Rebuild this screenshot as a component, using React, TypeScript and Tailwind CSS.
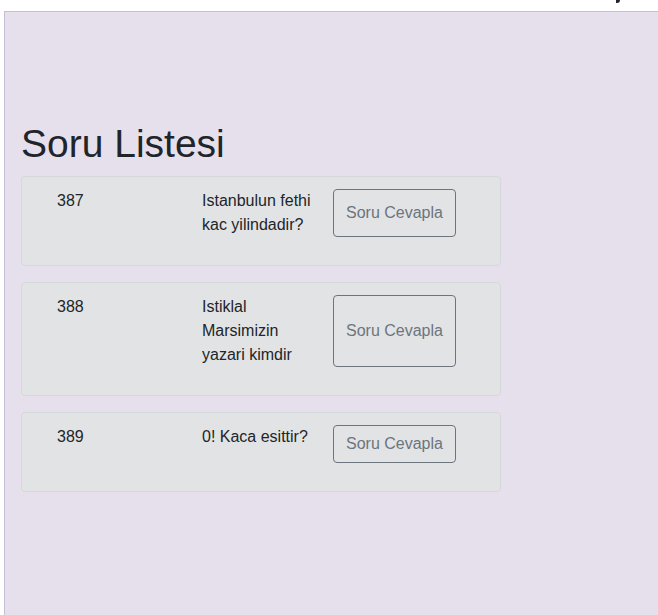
import React from 'react';

const QUESTIONS = [
  { id: 387, text: 'Istanbulun fethi kac yilindadir?' },
  { id: 388, text: 'Istiklal Marsimizin yazari kimdir' },
  { id: 389, text: '0! Kaca esittir?' },
];

export default function App() {
  return (
    <div className="relative h-[615px] w-[658px] overflow-hidden bg-white font-['Liberation_Sans',Arial,sans-serif] text-[#212529]">
      {/* cut-off descender from the page above */}
      <div className="absolute left-[616px] top-0 h-[3px] w-[4px] rounded-br-sm bg-[#1f2430]" />

      <div className="ml-[4px] mt-[11px] h-[604px] border-l border-t border-[#c7bfd6] bg-[#e6e0ec] pl-[16px] pt-[108px]">
        <h1 className="mb-[8px] text-[39px] leading-[48px] font-normal">Soru Listesi</h1>

        <div className="flex w-[480px] flex-col gap-[16px]">
          {QUESTIONS.map((q) => (
            <div
              key={q.id}
              className="rounded-[4px] border border-[#d6d8db] bg-[#e2e3e5] px-[20px] pt-[12px] pb-[28px] text-[16px] leading-[24px] text-[#212529]"
            >
              <div className="grid grid-cols-[145px_146px_1fr]">
                <div className="pl-[15px]">{q.id}</div>
                <div className="px-[15px]">{q.text}</div>
                <div className="flex">
                  <button className="w-[123px] rounded-[4px] border border-[#6c757d] px-[12px] py-[6px] text-[#6c757d]">
                    Soru Cevapla
                  </button>
                </div>
              </div>
            </div>
          ))}
        </div>
      </div>
    </div>
  );
}
